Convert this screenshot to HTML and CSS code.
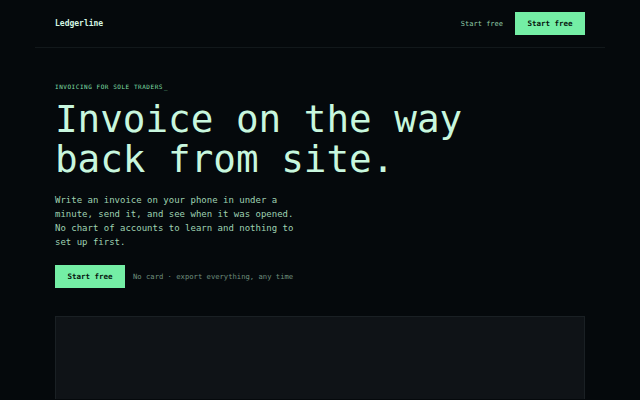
FILE: index.html
```html
<!DOCTYPE html>
<html lang="en">
<head>
<meta charset="utf-8">
<title>Ledgerline</title>
<link rel="stylesheet" href="styles.css">
</head>
<body>
<div class="page">
  <header class="nav">
    <div class="brand">Ledgerline</div>
    <div class="nav-actions">
      <a class="nav-link" href="#">Start free</a>
      <a class="btn" href="#">Start free</a>
    </div>
  </header>
  <main class="hero">
    <p class="eyebrow">INVOICING FOR SOLE TRADERS<span class="cursor">_</span></p>
    <h1 class="title">Invoice on the way<br>back from site.</h1>
    <p class="lede">Write an invoice on your phone in under a minute, send it, and see when it was opened. No chart of accounts to learn and nothing to set up first.</p>
    <div class="cta">
      <a class="btn" href="#">Start free</a>
      <span class="note">No card · export everything, any time</span>
    </div>
    <div class="preview"></div>
  </main>
</div>
</body>
</html>
```

FILE: styles.css
```css
* { box-sizing: border-box; }
html, body { margin: 0; padding: 0; }
body {
  background: #05090c;
  font-family: "DejaVu Sans Mono", "Liberation Mono", monospace;
  color: #c9f5dc;
  height: 400px;
  overflow: hidden;
}
.page {
  width: 570px;
  margin: 0 auto;
}
.nav {
  display: flex;
  align-items: center;
  justify-content: space-between;
  padding: 12px 20px;
  border-bottom: 1px solid #12181b;
}
.brand {
  font-size: 8px;
  font-weight: bold;
  color: #d6f7e4;
}
.nav-actions {
  display: flex;
  align-items: center;
  gap: 12px;
}
.nav-link {
  font-size: 7px;
  color: #8fc9a6;
  text-decoration: none;
}
.btn {
  display: inline-flex;
  align-items: center;
  justify-content: center;
  width: 70px;
  height: 23px;
  background: #74eea5;
  color: #06150d;
  font-size: 7.5px;
  font-weight: bold;
  text-decoration: none;
}
.hero {
  padding: 35px 20px 0;
}
.eyebrow {
  margin: 0;
  font-size: 6px;
  letter-spacing: 0.09em;
  color: #7fdfa6;
}
.cursor { margin-left: 1px; }
.title {
  margin: 9px 0 0;
  font-size: 37.6px;
  line-height: 40px;
  font-weight: normal;
  color: #c8f7de;
}
.lede {
  margin: 14px 0 0;
  width: 250px;
  font-size: 9px;
  line-height: 14px;
  color: #9fd2b2;
}
.cta {
  display: flex;
  align-items: center;
  gap: 8px;
  margin-top: 16px;
}
.note {
  font-size: 7.2px;
  color: #6f8f7d;
}
.preview {
  margin-top: 28px;
  height: 83px;
  background: #0f1317;
  border: 1px solid #1a2024;
  border-bottom: 0;
}
```
